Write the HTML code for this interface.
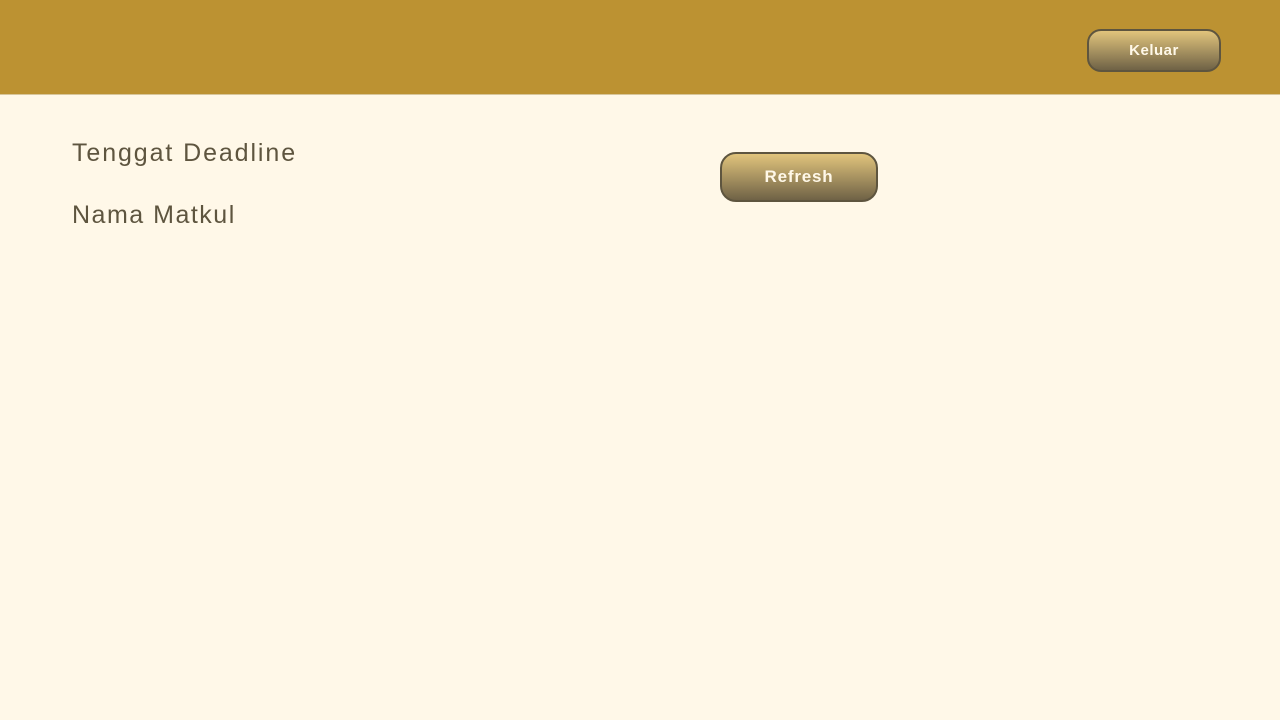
<!DOCTYPE html>
<html><head><style>
body{margin:0;width:1280px;height:720px;background:#fff8e8;font-family:"Liberation Sans",sans-serif;position:relative;overflow:hidden}
.top{position:absolute;left:0;top:0;width:1280px;height:95px;background:#bc9232;border-bottom:1px solid #d8c69a;box-sizing:border-box}
.btn{position:absolute;box-sizing:border-box;border:2px solid #5e553f;background:linear-gradient(#e1c47c,#6f6246);color:#fff8e8;font-weight:bold;text-align:center}
.t{position:absolute;left:72px;color:#5e553f;font-size:25px;letter-spacing:1.9px}
</style></head><body>
<div class="top"></div>
<div class="btn" style="left:1087px;top:29px;width:134px;height:43px;border-radius:14px;font-size:15px;line-height:39px;letter-spacing:0.5px">Keluar</div>
<div class="btn" style="left:720px;top:152px;width:158px;height:50px;border-radius:16px;font-size:17px;line-height:46px;letter-spacing:0.8px">Refresh</div>
<div class="t" style="top:139px">Tenggat Deadline</div>
<div class="t" style="top:201px;letter-spacing:1.5px">Nama Matkul</div>
</body></html>
